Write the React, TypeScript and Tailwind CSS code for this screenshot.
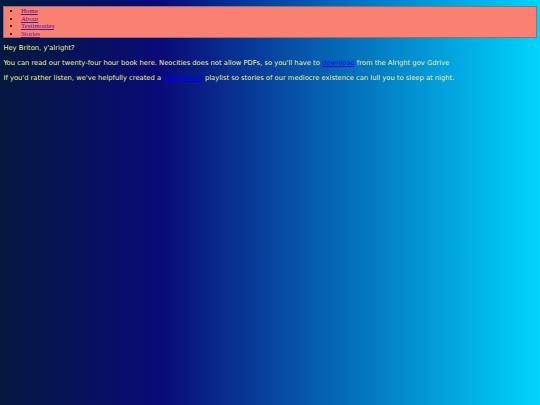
export default function App() {
  const navLinks = ["Home", "About", "Testimonies", "Stories"];

  return (
    <div className="min-h-screen w-full bg-[linear-gradient(90deg,#03193f_0%,#0a0a78_30%,#00d4ff_100%)] px-[3.4px] pt-[6px] pb-[3.4px]">
      <ul className="list-disc border border-[#8a6f86] bg-[#fa8072] pl-[16.5px] font-['Liberation_Serif',serif] text-[6.9px] leading-[7.6px]">
        {navLinks.map((name) => (
          <li key={name}>
            <a href="#" className="text-[#551a8b] underline">
              {name}
            </a>
          </li>
        ))}
      </ul>

      <div className="mt-[5.5px] flex flex-col gap-[6.75px] font-['DejaVu_Sans',Verdana,sans-serif] text-[6.76px] leading-[8.2px] text-[#f2f28c]">
        <p>Hey Briton, y'alright?</p>
        <p>
          You can read our twenty-four hour book here. Neocities does not allow PDFs, so you'll have to{" "}
          <a href="#" className="text-[#0000ee] underline">
            download
          </a>{" "}
          from the Alright gov Gdrive
        </p>
        <p>
          If you'd rather listen, we've helpfully created a{" "}
          <a href="#" className="text-[#0000ee] underline">
            Soundcloud
          </a>{" "}
          playlist so stories of our mediocre existence can lull you to sleep at night.
        </p>
      </div>
    </div>
  );
}
